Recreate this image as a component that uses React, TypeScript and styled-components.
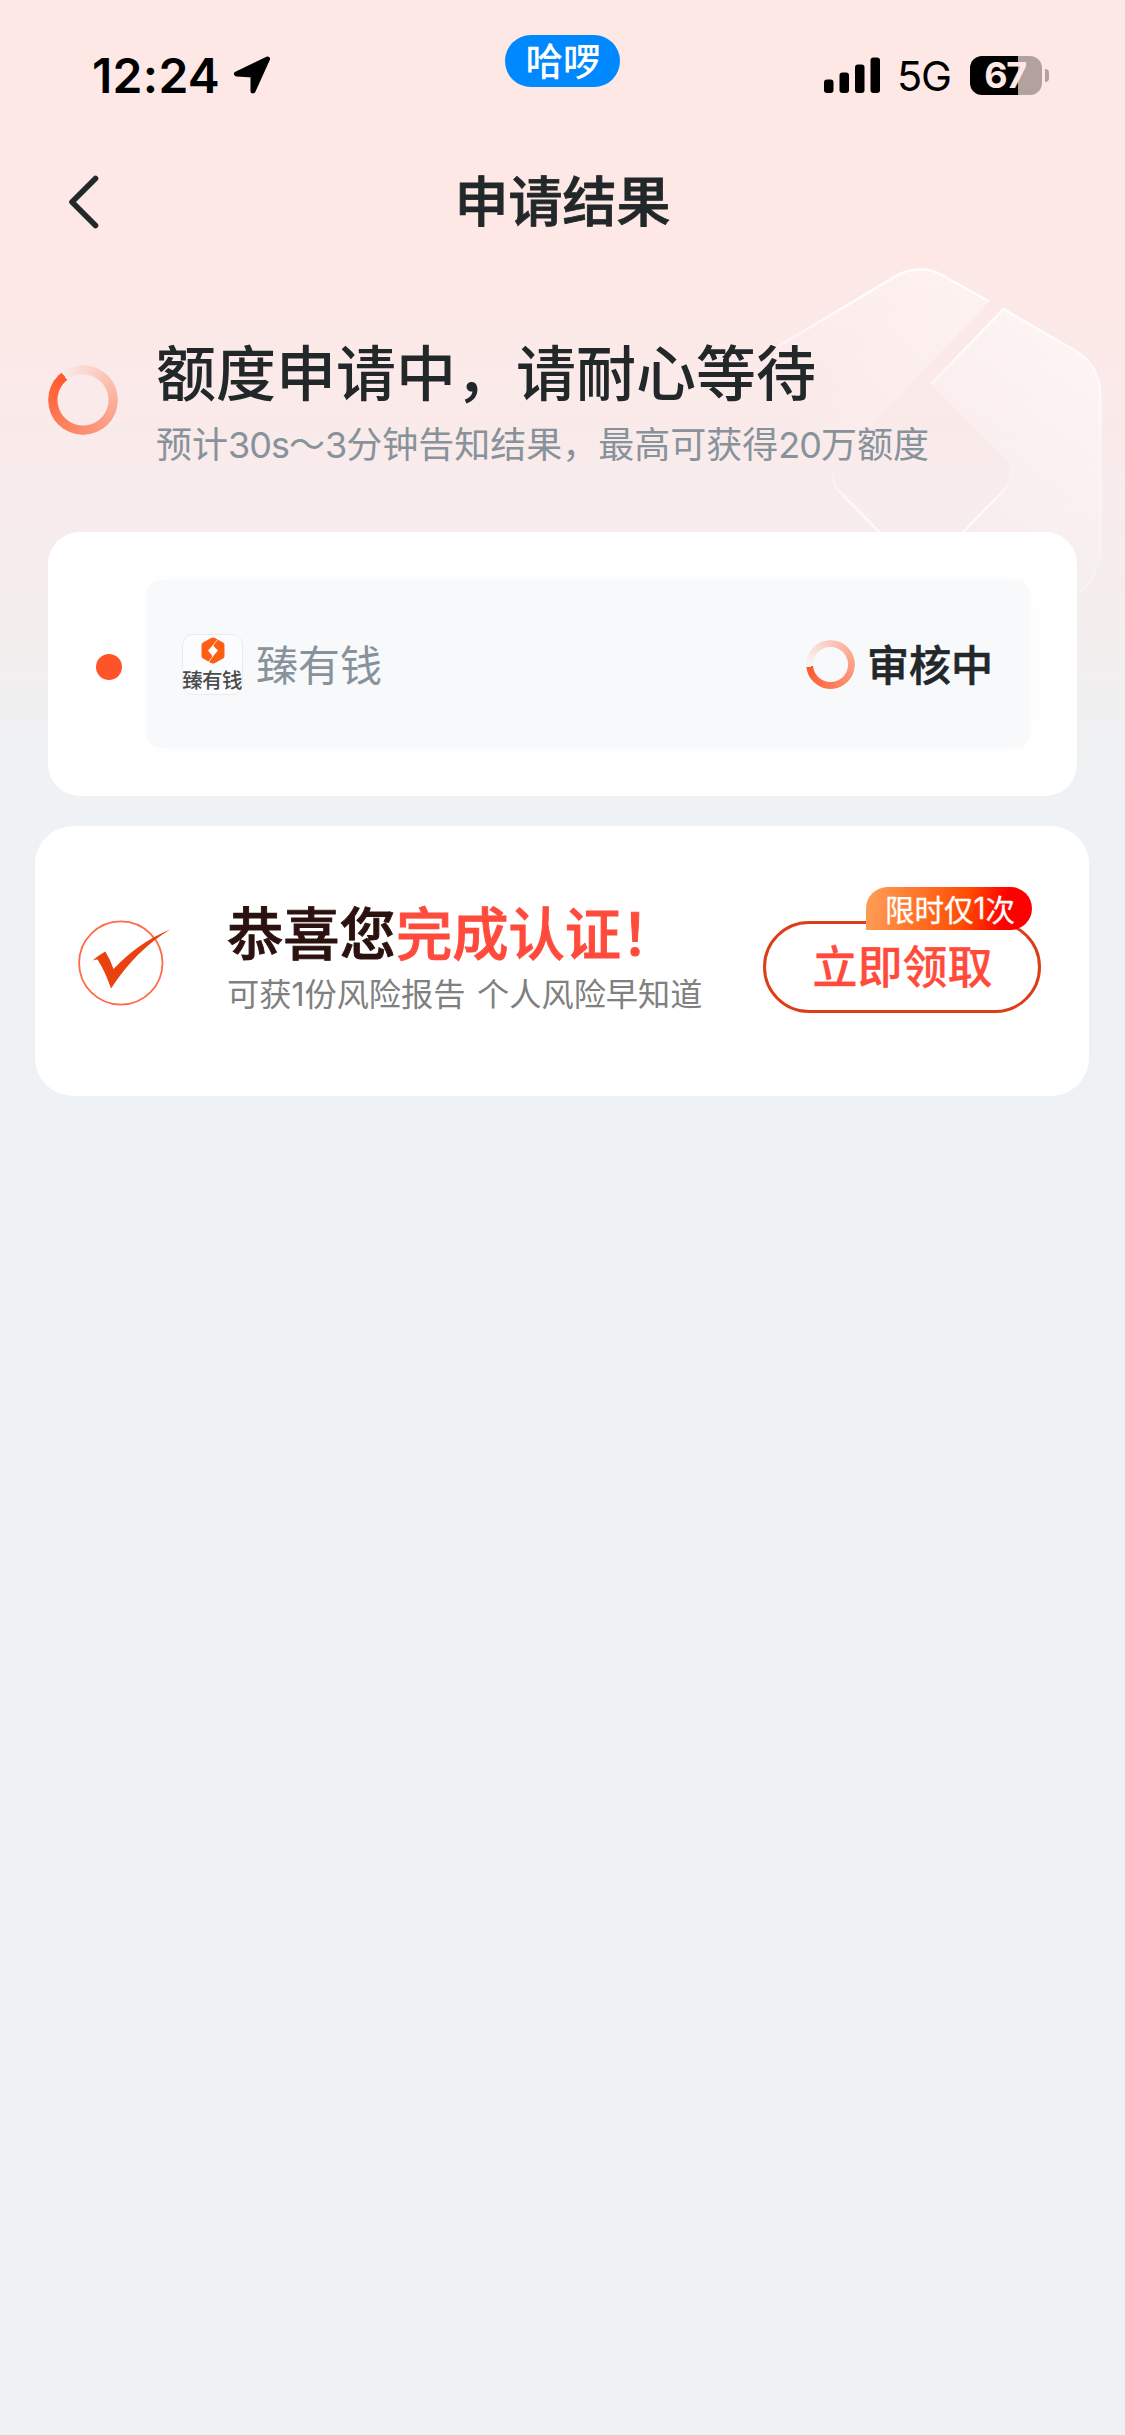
import React from "react";
import styled, { createGlobalStyle } from "styled-components";

const GlobalStyle = createGlobalStyle`
  *, *::before, *::after { box-sizing: border-box; }
  body {
    margin: 0;
    background: #eef2f5;
    font-family: Inter, "Noto Sans CJK SC", sans-serif;
    color: #22272a;
  }
`;

const Page = styled.div`
  position: relative;
  z-index: 0;
  display: flex;
  flex-direction: column;
  width: 1125px;
  height: 2435px;
  overflow: hidden;
  background:
    linear-gradient(180deg, #fde8e6 0, #fde8e6 250px, #f8ecec 510px, #f4eeee 620px, #f0f0f1 710px, #eff1f3 789px, #eef2f5 790px) no-repeat;
`;

const Emblem = styled.svg`
  position: absolute;
  z-index: -1;
  left: 740px;
  top: 250px;
`;

const StatusBar = styled.header`
  position: relative;
  display: flex;
  justify-content: space-between;
  height: 132px;
  padding: 0 76px 0 92px;
`;

const StatusGroup = styled.div<{ $gap: number }>`
  display: flex;
  align-items: center;
  gap: ${(p) => p.$gap}px;
  height: 150px;
`;

const Clock = styled.span`
  font-size: 48px;
  font-weight: 600;
  letter-spacing: 0.3px;
  color: #000;
`;

const AppPill = styled.div`
  position: absolute;
  left: 505px;
  top: 35px;
  display: flex;
  align-items: center;
  justify-content: center;
  width: 115px;
  height: 52px;
  padding: 0 0 5px 1px;
  border-radius: 26px;
  background: #0088ff;
  color: #fff;
  font-family: "Noto Sans CJK SC", sans-serif;
  font-size: 37.5px;
  font-weight: 500;
  line-height: 50px;
`;

const Network = styled.span`
  width: 54px;
  font-size: 41.5px;
  letter-spacing: -1.2px;
  color: #000;
  margin: 2px 0 0 -3px;
`;

const Battery = styled.div`
  display: flex;
  align-items: center;
  gap: 3px;
`;

const BatteryBody = styled.div<{ $level: number }>`
  display: flex;
  align-items: center;
  justify-content: center;
  width: 72px;
  height: 39px;
  padding-right: 2px;
  border-radius: 12px;
  background: linear-gradient(90deg, #000 ${(p) => p.$level}%, #b1a2a0 ${(p) => p.$level}%);
  color: #fde8e6;
  font-size: 36px;
  font-weight: 700;
  letter-spacing: -1.5px;
`;

const BatteryNub = styled.div`
  width: 4px;
  height: 13px;
  border-radius: 0 4px 4px 0;
  background: #b1a2a0;
`;

const NavBar = styled.nav`
  display: grid;
  grid-template-columns: 150px 1fr 150px;
  align-items: center;
  height: 140px;
`;

const BackIcon = styled.svg`
  margin-left: 66px;
`;

const NavTitle = styled.h1`
  margin: 0;
  padding-bottom: 6px;
  text-align: center;
  font-family: "Noto Sans CJK SC", sans-serif;
  font-size: 54px;
  font-weight: 500;
  line-height: 80px;
  -webkit-text-stroke: 0.8px currentColor;
`;

const Hero = styled.section`
  display: flex;
  align-items: center;
  gap: 38px;
  height: 260px;
  padding: 0 0 4px 48px;
`;

const Spinner = styled.div<{ $size: number; $stroke: number; $from: number }>`
  flex: none;
  width: ${(p) => p.$size}px;
  height: ${(p) => p.$size}px;
  border-radius: 50%;
  background: conic-gradient(from ${(p) => p.$from}deg, rgba(255, 88, 42, 0) 0, rgba(255, 88, 42, 0.06) 6%, rgba(255, 88, 42, 0.45) 40%, rgba(255, 88, 42, 0.68) 65%, #ff582a 100%);
  mask: radial-gradient(circle closest-side, transparent calc(100% - ${(p) => p.$stroke}px), #000 calc(100% - ${(p) => p.$stroke - 1}px));
`;

const HeroText = styled.div`
  display: flex;
  flex-direction: column;
`;

const HeroTitle = styled.h2`
  margin: 0;
  font-family: "Noto Sans CJK SC", sans-serif;
  font-size: 60px;
  font-weight: 500;
  line-height: 84px;
`;

const HeroHint = styled.p`
  margin: 2px 0 0;
  font-family: "Noto Sans CJK SC", sans-serif;
  font-size: 36px;
  line-height: 56px;
  color: #87929b;
  white-space: nowrap;
`;

const Digits = styled.span`
  font-family: Inter, sans-serif;
  letter-spacing: -1px;
`;

const ReviewCard = styled.section`
  display: flex;
  align-items: center;
  width: 1029px;
  height: 264px;
  margin-left: 48px;
  padding: 0 47px 0 48px;
  border-radius: 32px;
  background: #fff;
`;

const StepDot = styled.i`
  width: 26px;
  height: 26px;
  margin: 6px 25px 0 0;
  border-radius: 50%;
  background: #ff5427;
`;

const LenderRow = styled.div`
  display: flex;
  flex: 1;
  align-items: center;
  height: 168px;
  padding: 0 37px 0 35px;
  border-radius: 14px;
  background: #f8f9fb;
  box-shadow: 0 0 24px rgba(0, 0, 0, 0.02);
`;

const LenderLogo = styled.div`
  display: flex;
  flex-direction: column;
  align-items: center;
  width: 61px;
  height: 61px;
  padding-top: 2px;
  border: 1px solid #e9ebed;
  border-radius: 11px;
  background: #fbfcfd;
`;

const LogoCaption = styled.span`
  margin: 0 0 0 -1px;
  font-family: "Noto Sans CJK SC", sans-serif;
  font-size: 20.5px;
  font-weight: 500;
  line-height: 30px;
  letter-spacing: -0.7px;
  white-space: nowrap;
  color: #4a4b4b;
`;

const LenderName = styled.span`
  flex: 1;
  margin: 0 0 2px 13px;
  font-family: "Noto Sans CJK SC", sans-serif;
  font-size: 42px;
  line-height: 60px;
  color: #87929b;
`;

const ReviewState = styled.span`
  margin: 0 0 3px 12px;
  font-family: "Noto Sans CJK SC", sans-serif;
  font-size: 42px;
  font-weight: 500;
  line-height: 60px;
  -webkit-text-stroke: 0.6px currentColor;
`;

const RewardCard = styled.section`
  display: flex;
  align-items: center;
  width: 1054px;
  height: 270px;
  margin: 30px 0 0 35px;
  padding: 0 48px 0 41px;
  border-radius: 38px;
  background: #fff;
`;

const DoneIcon = styled.svg`
  margin-top: 3px;
`;

const RewardText = styled.div`
  flex: 1;
  margin-left: 55px;
  padding-bottom: 11px;
`;

const RewardTitle = styled.h3`
  margin: 0;
  font-family: "Noto Sans CJK SC", sans-serif;
  font-size: 56.3px;
  font-weight: 500;
  line-height: 76px;
  white-space: nowrap;
  color: #2b120f;
  -webkit-text-stroke: 0.9px currentColor;
`;

const Highlight = styled.em`
  font-style: normal;
  color: #ff4b3c;
`;

const RewardHint = styled.p`
  margin: 0;
  font-family: "Noto Sans CJK SC", sans-serif;
  font-size: 32.2px;
  line-height: 46px;
  word-spacing: 4.5px;
  white-space: nowrap;
  color: #808080;
`;

const Count = styled.span`
  font-family: Inter, sans-serif;
`;

const ClaimButton = styled.button`
  position: relative;
  width: 278px;
  height: 92px;
  margin-top: 12px;
  padding: 0 0 4px 1px;
  border: 3px solid #dc3f18;
  border-radius: 47px;
  background: #fff;
  color: #ff4b3c;
  font-family: "Noto Sans CJK SC", sans-serif;
  font-size: 45px;
  font-weight: 500;
  line-height: 60px;
  -webkit-text-stroke: 0.3px currentColor;
`;

const ClaimBadge = styled.span`
  position: absolute;
  right: 6px;
  top: -37px;
  display: flex;
  align-items: center;
  justify-content: center;
  width: 166px;
  height: 43px;
  padding: 0 0 1px 2px;
  border-radius: 22px 22px 22px 0;
  background: linear-gradient(100deg, #ff9a52 5%, #ff4b00 60%, #ff0000 82%);
  color: #fff;
  font-size: 29.5px;
  font-weight: 400;
  line-height: 43px;
  white-space: nowrap;
`;

const SIGNAL_HEIGHTS = [13.5, 20.5, 28.5, 35.5];

export default function App() {
  return (
    <>
      <GlobalStyle />
      <Page>
        <Emblem width="385" height="370" viewBox="740 250 385 370" fill="none">
          <defs>
            <linearGradient id="leftFace" x1="770" y1="440" x2="950" y2="280" gradientUnits="userSpaceOnUse">
              <stop offset="0.1" stopColor="#fff" stopOpacity="0" />
              <stop offset="1" stopColor="#fff" stopOpacity="0.4" />
            </linearGradient>
            <linearGradient id="rightFace" x1="960" y1="530" x2="1080" y2="350" gradientUnits="userSpaceOnUse">
              <stop offset="0" stopColor="#fff" stopOpacity="0.06" />
              <stop offset="1" stopColor="#fff" stopOpacity="0.48" />
            </linearGradient>
            <linearGradient id="topEdge" x1="770" y1="350" x2="850" y2="300" gradientUnits="userSpaceOnUse">
              <stop offset="0" stopColor="#fff" stopOpacity="0.35" />
              <stop offset="1" stopColor="#fff" stopOpacity="0.85" />
            </linearGradient>
            <linearGradient id="sideEdge" x1="0" y1="309" x2="0" y2="600" gradientUnits="userSpaceOnUse">
              <stop offset="0" stopColor="#fff" stopOpacity="0.9" />
              <stop offset="0.35" stopColor="#fff" stopOpacity="0.5" />
              <stop offset="1" stopColor="#fff" stopOpacity="0.2" />
            </linearGradient>
            <linearGradient id="innerEdge" x1="0" y1="470" x2="0" y2="500" gradientUnits="userSpaceOnUse">
              <stop offset="0" stopColor="#fff" stopOpacity="0.1" />
              <stop offset="1" stopColor="#fff" stopOpacity="0.75" />
            </linearGradient>
          </defs>
          <path d="M777 347L895 276.500Q919 263 942 275L989 301.500L840 458Q826 475 839 491L880 532H770Z" fill="url(#leftFace)" />
          <path d="M777 347L895 276.500Q919 263 942 275L989 301.500" stroke="url(#topEdge)" strokeWidth="2.500" />
          <path d="M1003.500 309L1076 351Q1100.500 366 1100.500 396V545Q1100 578 1080 592H960V534L1002 492Q1020 474 1002 455L931 384Z" fill="url(#rightFace)" />
          <path d="M931 384L1003.500 309L1076 351Q1100.500 366 1100.500 396V545Q1100 578 1080 592" stroke="url(#sideEdge)" strokeWidth="2.200" />
          <path d="M833 472Q832 484 839 491L880 533M1010 470Q1012 482 1002 492L962 533" stroke="url(#innerEdge)" strokeWidth="2.200" />
        </Emblem>

        <StatusBar>
          <StatusGroup $gap={13}>
            <Clock>12:24</Clock>
            <svg width="38" height="38" viewBox="0 0 38 38">
              <path d="M34.500 3L3.500 18L20 19V35Z" fill="#000" stroke="#000" strokeWidth="5" strokeLinejoin="round" />
            </svg>
          </StatusGroup>
          <AppPill>哈啰</AppPill>
          <StatusGroup $gap={19}>
            <svg width="57" height="36" viewBox="0 0 57 36">
              {SIGNAL_HEIGHTS.map((h, i) => (
                <rect key={h} x={i * 15.5} y={36 - h} width="9.500" height={h} rx="3" fill="#000" />
              ))}
            </svg>
            <Network>5G</Network>
            <Battery>
              <BatteryBody $level={67}>67</BatteryBody>
              <BatteryNub />
            </Battery>
          </StatusGroup>
        </StatusBar>

        <NavBar>
          <BackIcon width="36" height="60" viewBox="0 0 36 60" fill="none">
            <path d="M29.500 6.500L6 30L29.500 53.500" stroke="#22272a" strokeWidth="5.600" strokeLinecap="round" strokeLinejoin="round" />
          </BackIcon>
          <NavTitle>申请结果</NavTitle>
        </NavBar>

        <Hero>
          <Spinner $size={70} $stroke={10} $from={322} />
          <HeroText>
            <HeroTitle>额度申请中，请耐心等待</HeroTitle>
            <HeroHint>
              预计<Digits>30s</Digits>～<Digits>3</Digits>分钟告知结果，最高可获得<Digits>20</Digits>万额度
            </HeroHint>
          </HeroText>
        </Hero>

        <ReviewCard>
          <StepDot />
          <LenderRow>
            <LenderLogo>
              <svg width="24" height="27" viewBox="0 0 24 27">
                <path d="M12 0.500Q13 0.500 14 1L22 5.500Q23.500 6.500 23.500 8V19Q23.500 20.500 22 21.500L14 26Q12 27 10 26L2 21.500Q0.500 20.500 0.500 19V8Q0.500 6.500 2 5.500L10 1Q11 0.500 12 0.500Z" fill="#ff5f12" />
                <path d="M12.500 7.500L7 13.500L11 18.500V20.500L17 13.500L12.500 9Z" fill="#fff" />
                <path d="M16.500 2.500L12 8.500M12 19L7.500 25" stroke="#fff" strokeOpacity="0.75" strokeWidth="1" />
              </svg>
              <LogoCaption>臻有钱</LogoCaption>
            </LenderLogo>
            <LenderName>臻有钱</LenderName>
            <Spinner $size={49} $stroke={7.5} $from={264} />
            <ReviewState>审核中</ReviewState>
          </LenderRow>
        </ReviewCard>

        <RewardCard>
          <DoneIcon width="96" height="90" viewBox="76 918 96 90" fill="none">
            <circle cx="120.800" cy="963" r="41.700" stroke="#ff6b47" strokeWidth="1.800" />
            <path d="M92.500 960.500Q99 955 105.300 951.500Q110 959 113.500 969Q139 942 170.300 929.500Q136 950 111 988.500Q105 971 97.500 959.500Q95 959.500 92.500 960.500Z" fill="#e8430f" />
          </DoneIcon>
          <RewardText>
            <RewardTitle>
              恭喜您<Highlight>完成认证！</Highlight>
            </RewardTitle>
            <RewardHint>
              可获<Count>1</Count>份风险报告 个人风险早知道
            </RewardHint>
          </RewardText>
          <ClaimButton>
            立即领取
            <ClaimBadge>
              限时仅<Count>1</Count>次
            </ClaimBadge>
          </ClaimButton>
        </RewardCard>
      </Page>
    </>
  );
}
